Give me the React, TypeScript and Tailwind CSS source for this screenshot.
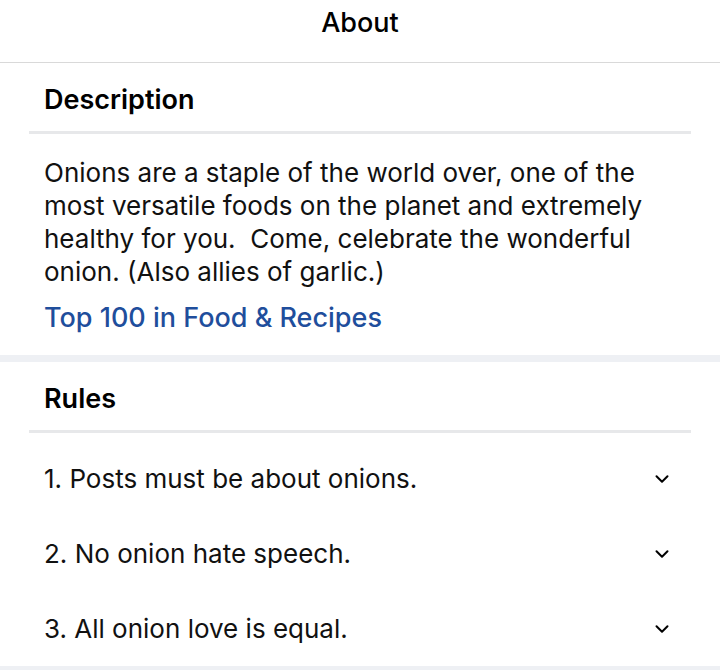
import { ChevronDown } from "lucide-react";

const rules = [
  "1. Posts must be about onions.",
  "2. No onion hate speech.",
  "3. All onion love is equal.",
];

export default function App() {
  return (
    <div
      className="w-[720px] h-[670px] overflow-hidden bg-white text-black"
      style={{ fontFamily: "Inter, 'Noto Sans', sans-serif" }}
    >
      {/* Header */}
      <div className="h-[63px] pt-[8px] border-b border-[#d9d9d9] flex justify-center">
        <span className="text-[27px] leading-[30px] font-medium">About</span>
      </div>

      {/* Description */}
      <div className="px-[29px]">
        <div className="h-[68px] pt-[6px] px-[15px] flex items-center">
          <h2 className="text-[27px] font-semibold">Description</h2>
        </div>
        <div className="h-[3px] bg-[#e7e8ea]" />
        <div className="px-[15px] pt-[22px] pb-[21px]">
          <p className="text-[26px] leading-[33px] text-[#111] whitespace-pre">
            {"Onions are a staple of the world over, one of the\nmost versatile foods on the planet and extremely\nhealthy for you.  Come, celebrate the wonderful\nonion. (Also allies of garlic.)"}
          </p>
          <p className="mt-[13px] text-[27px] leading-[33px] font-medium text-[#1f4e9c]">
            Top 100 in Food &amp; Recipes
          </p>
        </div>
      </div>

      <div className="h-[7px] bg-[#eef0f4]" />

      {/* Rules */}
      <div className="px-[29px]">
        <div className="h-[68px] pt-[6px] px-[15px] flex items-center">
          <h2 className="text-[27px] font-semibold">Rules</h2>
        </div>
        <div className="h-[3px] bg-[#e7e8ea]" />
        <div className="pt-[8px]">
          {rules.map((r) => (
            <div key={r} className="h-[75px] pl-[15px] pr-[18px] flex items-center justify-between">
              <span className="text-[26px] text-[#111]">{r}</span>
              <ChevronDown className="w-[22px] h-[22px] text-black" strokeWidth={2.2} />
            </div>
          ))}
        </div>
      </div>

      <div className="h-[7px] bg-[#eef0f4]" />
    </div>
  );
}
